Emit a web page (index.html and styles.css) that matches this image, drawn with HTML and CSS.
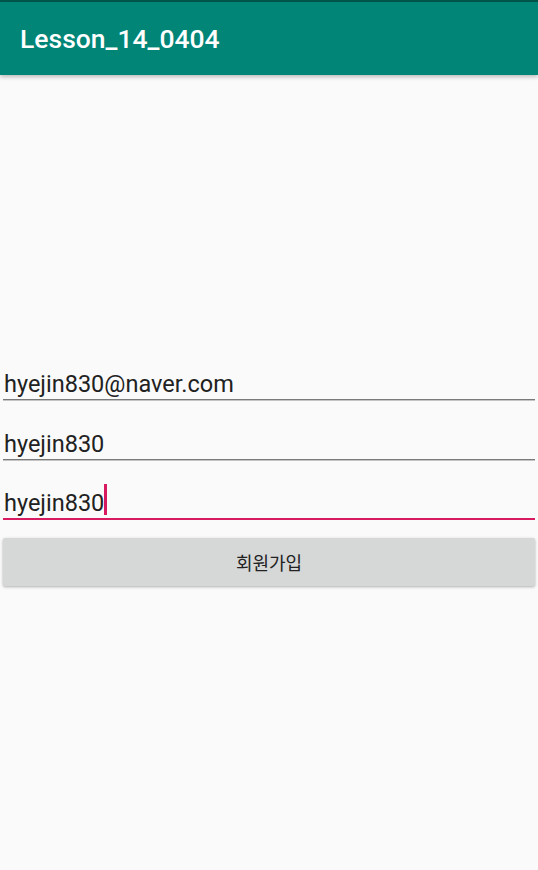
FILE: index.html
```html
<!DOCTYPE html>
<html>
<head>
<meta charset="utf-8">
<link rel="stylesheet" href="styles.css">
</head>
<body>
<div class="statusbar"></div>
<header class="appbar">
  <h1 class="title">Lesson_14_0404</h1>
</header>
<main class="form">
  <div class="field"><span class="value">hyejin830@naver.com</span></div>
  <div class="field"><span class="value">hyejin830</span></div>
  <div class="field field-focused"><span class="value">hyejin830</span><span class="cursor"></span></div>
  <button class="btn">회원가입</button>
</main>
</body>
</html>
```

FILE: styles.css
```css
html, body {
  margin: 0;
  padding: 0;
  background: #fafafa;
  width: 538px;
  height: 870px;
  overflow: hidden;
  font-family: Roboto, "Noto Sans CJK KR", sans-serif;
}
.statusbar {
  height: 2px;
  background: #00574b;
}
.appbar {
  height: 73px;
  background: #008577;
  display: flex;
  align-items: center;
  padding-left: 20px;
  box-shadow: 0 2px 4px rgba(0,0,0,0.25);
  position: relative;
}
.title {
  margin: 0;
  color: #fff;
  font-weight: 500;
  font-size: 26.5px;
  letter-spacing: 0;
}
.form {
  padding: 265px 3px 0 3px;
  display: flex;
  flex-direction: column;
}
.field {
  height: 59px;
  border-bottom: 1px solid #7a7a7a;
  box-shadow: 0 1px 0 #c4c4c4;
  display: flex;
  align-items: flex-end;
  box-sizing: content-box;
}
.field .value {
  font-size: 23.5px;
  line-height: 26px;
  color: #212121;
  padding-left: 1px;
  padding-bottom: 2px;
}
.field-focused {
  height: 58px;
  border-bottom: 2px solid #d81b60;
  box-shadow: none;
}
.cursor {
  width: 3px;
  height: 31px;
  background: #d81b60;
  margin-bottom: 3px;
  margin-left: 0;
}
.btn {
  margin-top: 18px;
  height: 48px;
  border: none;
  border-radius: 2px;
  background: #d6d7d7;
  box-shadow: 0 1px 3px rgba(0,0,0,0.3);
  font-family: "Noto Sans CJK KR", sans-serif;
  font-size: 18px;
  color: #222;
  padding: 0;
}
```
